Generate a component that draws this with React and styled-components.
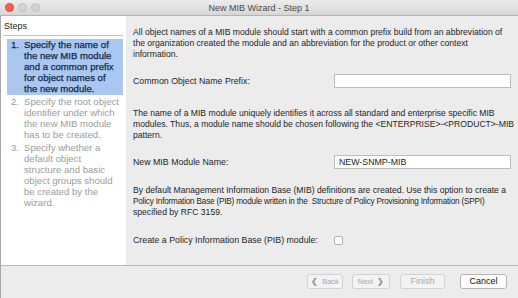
import React from "react";
import styled, { createGlobalStyle } from "styled-components";

const Global = createGlobalStyle`
  html, body { margin: 0; padding: 0; background: #ececec; }
  * { box-sizing: border-box; }
`;

const Window = styled.div`
  width: 518px;
  height: 298px;
  display: flex;
  flex-direction: column;
  font-family: "Liberation Sans", Arial, sans-serif;
  background: #ececec;
  overflow: hidden;
`;

const TitleBar = styled.div`
  position: relative;
  height: 16px;
  flex: none;
  display: flex;
  align-items: center;
  justify-content: center;
  background: linear-gradient(#ececec, #d6d6d6);
  border-bottom: 1px solid #b4b4b4;
  font-size: 9px;
  color: #4a4a4a;
`;

const Lights = styled.div`
  position: absolute;
  left: 5px;
  top: 3px;
  display: flex;
  gap: 4px;
`;

const Light = styled.span`
  width: 9px;
  height: 9px;
  border-radius: 50%;
  background: ${(p) => p.$c};
  border: 1px solid ${(p) => p.$b};
`;

const Body = styled.div`
  flex: 1;
  display: flex;
  min-height: 0;
  border-left: 1px solid #a8a8a8;
`;

const Steps = styled.div`
  width: 125px;
  flex: none;
  background: #fff;
  padding: 3px 3px 0 2px;
`;

const StepsTitle = styled.div`
  font-size: 9px;
  color: #222;
  padding: 2px 0 4px 1px;
  border-bottom: 1px solid #cbbcbc;
`;

const StepList = styled.div`
  margin-top: 3px;
  padding-left: 4px;
  display: flex;
  flex-direction: column;
`;

const Step = styled.div`
  display: flex;
  padding: 0 2px 1px 4px;
  margin-bottom: 1px;
  font-size: 9.6px;
  line-height: 11px;
  white-space: nowrap;
  background: ${(p) => (p.$active ? "#a9c7f1" : "transparent")};
  color: ${(p) => (p.$active ? "#13284a" : "#9c9c9c")};
  -webkit-text-stroke: ${(p) => (p.$active ? "0.25px #13284a" : "0")};
`;

const StepNum = styled.span`
  width: 13px;
  flex: none;
`;

const Content = styled.div`
  flex: 1;
  min-width: 0;
  padding: 11px 7px 0 7px;
  display: flex;
  flex-direction: column;
  font-size: 8.6px;
  line-height: 11px;
  color: #1e1e1e;
`;

const Para = styled.p`
  margin: 0 0 ${(p) => p.$mb}px 0;
  white-space: nowrap;
`;

const Tight = styled.span`
  font-size: 8.2px;
  letter-spacing: -0.2px;
`;

const Row = styled.div`
  display: flex;
  align-items: center;
  justify-content: ${(p) => (p.$start ? "flex-start" : "space-between")};
  margin-bottom: ${(p) => p.$mb}px;
`;

const Label = styled.span`
  font-size: 8.8px;
`;

const Input = styled.div`
  flex: none;
  width: 177px;
  height: 14px;
  background: #fff;
  border: 1px solid #bdbdbd;
  font-size: 8.8px;
  line-height: 12px;
  padding-left: 4px;
  color: #222;
`;

const Check = styled.span`
  width: 9px;
  height: 9px;
  border: 1px solid #b0b0b0;
  border-radius: 2px;
  background: #fff;
  margin-left: 16px;
`;

const Footer = styled.div`
  height: 33px;
  flex: none;
  border-top: 1px solid #b9b9b9;
  border-left: 1px solid #a8a8a8;
  display: flex;
  align-items: center;
  justify-content: flex-end;
  padding: 0 11px 2px 0;
`;

const Button = styled.button`
  width: ${(p) => p.$w}px;
  height: 15px;
  padding: 0;
  margin-left: ${(p) => p.$ml}px;
  font-family: inherit;
  font-size: ${(p) => (p.$small ? 7.5 : 9)}px;
  color: ${(p) => (p.$disabled ? "#a8a8a8" : "#111")};
  background: ${(p) => (p.$disabled ? "#f3f3f3" : "#fff")};
  border: 1px solid ${(p) => (p.$disabled ? "#d2d2d2" : "#b4b4b4")};
  border-radius: 3px;
  display: flex;
  align-items: center;
  justify-content: center;
  gap: 4px;
`;

const Chev = styled.span`
  font-size: 8px;
  font-weight: bold;
  color: #9a9a9a;
`;

export default function App() {
  return (
    <Window>
      <Global />
      <TitleBar>
        <Lights>
          <Light $c="#fc5f57" $b="#e0443e" />
          <Light $c="#d4d4d4" $b="#c0c0c0" />
          <Light $c="#d4d4d4" $b="#c0c0c0" />
        </Lights>
        New MIB Wizard - Step 1
      </TitleBar>
      <Body>
        <Steps>
          <StepsTitle>Steps</StepsTitle>
          <StepList>
            <Step $active>
              <StepNum>1.</StepNum>
              <span>Specify the name of<br />the new MIB module<br />and a common prefix<br />for object names of<br />the new module.</span>
            </Step>
            <Step>
              <StepNum>2.</StepNum>
              <span>Specify the root object<br />identifier under which<br />the new MIB module<br />has to be created.</span>
            </Step>
            <Step>
              <StepNum>3.</StepNum>
              <span>Specify whether a<br />default object<br />structure and basic<br />object groups should<br />be created by the<br />wizard.</span>
            </Step>
          </StepList>
        </Steps>
        <Content>
          <Para $mb={14}>
            All object names of a MIB module should start with a common prefix build from an abbreviation of<br />
            the organization created the module and an abbreviation for the product or other context<br />
            information.
          </Para>
          <Row $mb={20}>
            <Label>Common Object Name Prefix:</Label>
            <Input />
          </Row>
          <Para $mb={14}>
            The name of a MIB module uniquely identifies it across all standard and enterprise specific MIB<br />
            modules. Thus, a module name should be chosen following the &lt;ENTERPRISE&gt;-&lt;PRODUCT&gt;-MIB<br />
            pattern.
          </Para>
          <Row $mb={16}>
            <Label>New MIB Module Name:</Label>
            <Input>NEW-SNMP-MIB</Input>
          </Row>
          <Para $mb={17}>
            By default Management Information Base (MIB) definitions are created. Use this option to create a<br />
            <Tight>Policy Information Base (PIB) module written in the&nbsp; Structure of Policy Provisioning Information (SPPI)</Tight><br />
            specified by RFC 3159.
          </Para>
          <Row $mb={0} $start>
            <Label>Create a Policy Information Base (PIB) module:</Label>
            <Check />
          </Row>
        </Content>
      </Body>
      <Footer>
        <Button $disabled $w={36} $ml={0} $small><Chev>❮</Chev>Back</Button>
        <Button $disabled $w={38} $ml={9} $small>Next<Chev>❯</Chev></Button>
        <Button $disabled $w={45} $ml={10}>Finish</Button>
        <Button $w={47} $ml={15}>Cancel</Button>
      </Footer>
    </Window>
  );
}
